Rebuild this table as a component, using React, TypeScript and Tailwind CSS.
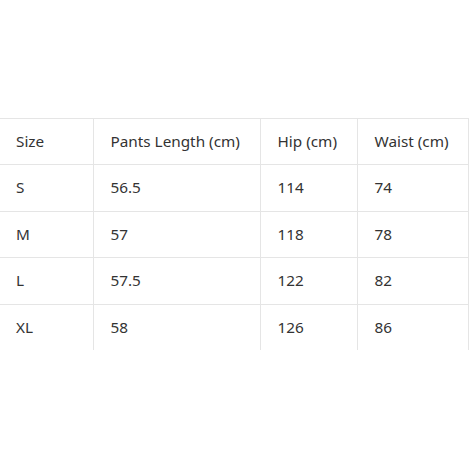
const rows = [
  { size: 'S', length: '56.5', hip: '114', waist: '74' },
  { size: 'M', length: '57', hip: '118', waist: '78' },
  { size: 'L', length: '57.5', hip: '122', waist: '82' },
  { size: 'XL', length: '58', hip: '126', waist: '86' },
]

const cell = 'px-4 py-3 text-left font-normal leading-[21.4px] border-r border-[#e5e5e5]'

export default function App() {
  return (
    <div
      className="h-[470px] w-[470px] bg-white pt-[118px] text-[15.3px] text-[#333]"
      style={{ fontFamily: '"Noto Sans", "Segoe UI", sans-serif' }}
    >
      <table className="w-[468px] table-fixed border-collapse">
        <colgroup>
          <col className="w-[93px]" />
          <col className="w-[167px]" />
          <col className="w-[97px]" />
          <col className="w-[111px]" />
        </colgroup>
        <thead>
          <tr className="border-t border-b border-[#e5e5e5]">
            <th className={cell}>Size</th>
            <th className={cell + ' pl-[17px]'}>Pants Length (cm)</th>
            <th className={cell + ' pl-[17px]'}>Hip (cm)</th>
            <th className={cell + ' pl-[17px]'}>Waist (cm)</th>
          </tr>
        </thead>
        <tbody>
          {rows.map((r, i) => (
            <tr key={r.size} className={i < rows.length - 1 ? 'border-b border-[#e5e5e5]' : ''}>
              <td className={cell}>{r.size}</td>
              <td className={cell + ' pl-[17px]'}>{r.length}</td>
              <td className={cell + ' pl-[17px]'}>{r.hip}</td>
              <td className={cell + ' pl-[17px]'}>{r.waist}</td>
            </tr>
          ))}
        </tbody>
      </table>
    </div>
  )
}
